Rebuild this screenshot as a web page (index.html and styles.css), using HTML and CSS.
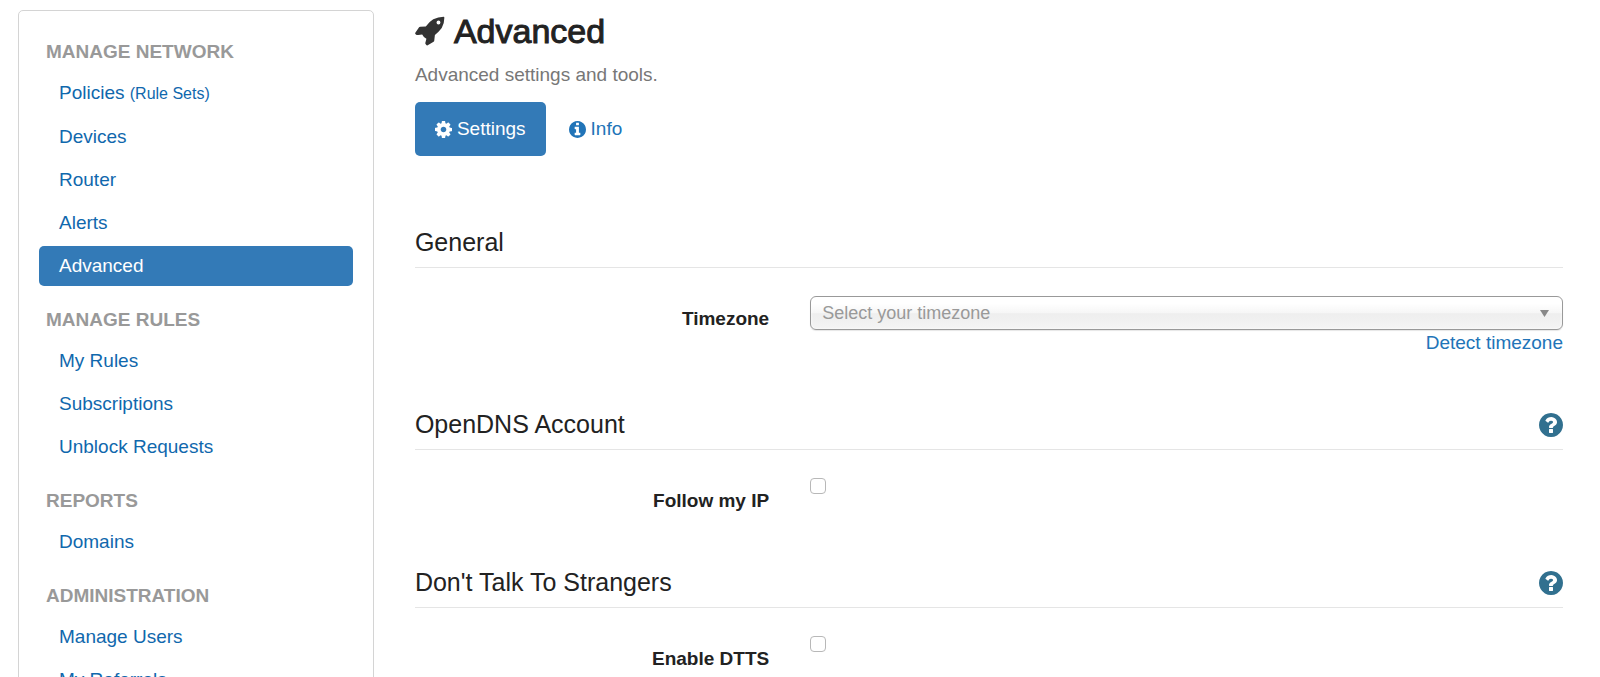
FILE: index.html
```html
<!DOCTYPE html>
<html lang="en">
<head>
<meta charset="utf-8">
<title>Advanced</title>
<link rel="stylesheet" href="styles.css">
</head>
<body>
<svg class="sprite" aria-hidden="true">
  <symbol id="question" viewBox="128 128 1536 1536"><path d="M1024 1376v-192q0-14-9-23t-23-9h-192q-14 0-23 9t-9 23v192q0 14 9 23t23 9h192q14 0 23-9t9-23zm256-672q0-88-55.500-163t-138.500-116-170-41q-243 0-371 213-15 24 8 42l132 100q7 6 19 6 16 0 25-12 53-68 86-92 34-24 86-24 48 0 85.500 26t37.500 59q0 38-20 61t-68 45q-63 28-115.500 86.500t-52.500 125.500v36q0 14 9 23t23 9h192q14 0 23-9t9-23q0-19 21.500-49.500t54.500-49.500q32-18 49-28.500t46-35 44.500-48 28-60.500 12.500-81zm384 192q0 209-103 385.500t-279.500 279.500-385.500 103-385.500-103-279.500-279.500-103-385.500 103-385.500 279.500-279.500 385.500-103 385.500 103 279.500 279.500 103 385.500z"/></symbol>
</svg>
<div class="page">
  <nav class="sidebar" aria-label="Main">
    <h4 class="nav-header">MANAGE NETWORK</h4>
    <ul class="nav-list">
      <li><a class="nav-link" href="#">Policies <small class="nav-note">(Rule Sets)</small></a></li>
      <li><a class="nav-link" href="#">Devices</a></li>
      <li><a class="nav-link" href="#">Router</a></li>
      <li><a class="nav-link" href="#">Alerts</a></li>
      <li><a class="nav-link nav-link-active" href="#">Advanced</a></li>
    </ul>
    <h4 class="nav-header">MANAGE RULES</h4>
    <ul class="nav-list">
      <li><a class="nav-link" href="#">My Rules</a></li>
      <li><a class="nav-link" href="#">Subscriptions</a></li>
      <li><a class="nav-link" href="#">Unblock Requests</a></li>
    </ul>
    <h4 class="nav-header">REPORTS</h4>
    <ul class="nav-list">
      <li><a class="nav-link" href="#">Domains</a></li>
    </ul>
    <h4 class="nav-header">ADMINISTRATION</h4>
    <ul class="nav-list">
      <li><a class="nav-link" href="#">Manage Users</a></li>
      <li><a class="nav-link" href="#">My Referrals</a></li>
    </ul>
  </nav>

  <main class="content">
    <h1 class="title">
      <svg class="title-icon" viewBox="44 47 92 92" aria-hidden="true"><path fill-rule="evenodd" d="M132 49Q134 49 134 52Q134 70 126 84Q118 95 105 105L103 123Q103 125 101 126L83 137Q80 138 78 135L76 132Q75 130 76 128L79 117Q71 114 66 104L54 105Q51 106 49 105L45 102Q44 100 45 98L56 82Q57 80 60 80L77 79Q87 65 100 57Q115 49 132 49ZM116 61A6 6 0 1 0 116 73A6 6 0 1 0 116 61Z"/></svg>
      Advanced
    </h1>
    <p class="lead">Advanced settings and tools.</p>
    <div class="tabs">
      <a class="tab tab-active" href="#"><svg class="tab-icon" viewBox="128 128 1536 1536" aria-hidden="true"><path d="M1152 896q0-106-75-181t-181-75-181 75-75 181 75 181 181 75 181-75 75-181zm512-109v222q0 12-8 23t-20 13l-185 28q-19 54-39 91 35 50 107 138 10 12 10 25t-9 23q-27 37-99 108t-94 71q-12 0-26-9l-138-108q-44 23-91 38-16 136-29 186-7 28-36 28h-222q-14 0-24.500-8.500t-11.500-21.500l-28-184q-49-16-90-37l-141 107q-10 9-25 9-14 0-25-11-126-114-165-168-7-10-7-23 0-12 8-23 15-21 51-66.500t54-70.500q-27-50-41-99l-183-27q-13-2-21-12.500t-8-23.500v-222q0-12 8-23t19-13l186-28q14-46 39-92-40-57-107-138-10-12-10-24 0-10 9-23 26-36 98.500-107.500t94.500-71.500q13 0 26 10l138 107q44-23 91-38 16-136 29-186 7-28 36-28h222q14 0 24.500 8.500t11.500 21.500l28 184q49 16 90 37l142-107q9-9 24-9 13 0 25 10 129 119 165 170 7 8 7 22 0 12-8 23-15 21-51 66.500t-54 70.500q26 50 41 98l183 28q13 2 21 12.500t8 23.500z"/></svg>Settings</a>
      <a class="tab" href="#"><svg class="tab-icon" viewBox="128 128 1536 1536" aria-hidden="true"><path d="M1152 1376v-160q0-14-9-23t-23-9h-96v-512q0-14-9-23t-23-9h-320q-14 0-23 9t-9 23v160q0 14 9 23t23 9h96v320h-96q-14 0-23 9t-9 23v160q0 14 9 23t23 9h448q14 0 23-9t9-23zm-128-896v-160q0-14-9-23t-23-9h-192q-14 0-23 9t-9 23v160q0 14 9 23t23 9h192q14 0 23-9t9-23zm640 416q0 209-103 385.500t-279.500 279.500-385.500 103-385.500-103-279.500-279.500-103-385.500 103-385.500 279.500-279.500 385.500-103 385.500 103 279.500 279.500 103 385.500z"/></svg>Info</a>
    </div>

    <section class="section">
      <div class="section-head"><h2 class="section-title">General</h2></div>
      <div class="field">
        <label class="field-label" for="timezone">Timezone</label>
        <div class="field-control">
          <div class="select-wrap">
            <select class="select" id="timezone"><option>Select your timezone</option></select>
            <svg class="select-arrow" viewBox="0 0 9 7" aria-hidden="true"><path d="M0 0h9L4.500 7z"/></svg>
          </div>
          <a class="detect" href="#">Detect timezone</a>
        </div>
      </div>
    </section>

    <section class="section">
      <div class="section-head">
        <h2 class="section-title">OpenDNS Account</h2>
        <a class="help" href="#" aria-label="Help"><svg class="help-icon" aria-hidden="true"><use href="#question"/></svg></a>
      </div>
      <div class="field">
        <label class="field-label" for="follow-ip">Follow my IP</label>
        <div class="field-control"><input class="checkbox" type="checkbox" id="follow-ip"></div>
      </div>
    </section>

    <section class="section">
      <div class="section-head">
        <h2 class="section-title">Don't Talk To Strangers</h2>
        <a class="help" href="#" aria-label="Help"><svg class="help-icon" aria-hidden="true"><use href="#question"/></svg></a>
      </div>
      <div class="field">
        <label class="field-label" for="dtts">Enable DTTS</label>
        <div class="field-control"><input class="checkbox" type="checkbox" id="dtts"></div>
      </div>
    </section>
  </main>
</div>
</body>
</html>
```
FILE: styles.css
```css
* {
  box-sizing: border-box;
}

body {
  margin: 0;
  background: #fff;
  color: #222;
  font-family: "Liberation Sans", Arial, sans-serif;
  font-size: 19px;
  line-height: 24px;
}

a {
  color: #2174b8;
  text-decoration: none;
}

svg {
  display: block;
  flex: none;
  fill: currentColor;
}

.sprite {
  position: absolute;
  width: 0;
  height: 0;
}

.page {
  display: grid;
  grid-template-columns: minmax(0, 31fr) minmax(0, 100fr);
  gap: 41px;
  align-items: start;
  padding: 10px 37px 10px 18px;
}

/* Sidebar */

.sidebar {
  padding: 7px 20px 20px;
  border: 1px solid #d4d4d4;
  border-radius: 5px;
}

.nav-header {
  margin: 0;
  padding: 22px 7px 9px;
  color: #999;
  font-size: 19px;
  font-weight: bold;
}

.nav-list {
  display: flex;
  flex-direction: column;
  gap: 3px;
  margin: 0;
  padding: 0;
  list-style: none;
}

.nav-link {
  display: block;
  padding: 8px 20px;
  border-radius: 5px;
  color: #1068ad;
}

.nav-link-active {
  background: #337ab7;
  color: #fff;
}

.nav-note {
  font-size: 16px;
}

/* Page heading and tabs */

.title {
  display: flex;
  align-items: center;
  gap: 9px;
  margin: 0;
  font-size: 34px;
  font-weight: 500;
  line-height: 42px;
  -webkit-text-stroke: 1px currentColor;
}

.title-icon {
  width: 30px;
  height: 30px;
  color: #333;
}

.lead {
  margin: 11px 0 15px;
  color: #777;
}

.tabs {
  display: flex;
  gap: 3px;
  margin-bottom: 71px;
}

.tab {
  display: flex;
  align-items: center;
  gap: 5px;
  padding: 15px 20px;
  border-radius: 5px;
}

.tab-active {
  background: #337ab7;
  color: #fff;
}

.tab-icon {
  width: 17px;
  height: 17px;
}

/* Settings sections */

.section {
  margin-bottom: 54px;
}

.section-head {
  display: flex;
  align-items: flex-end;
  justify-content: space-between;
  padding-bottom: 10px;
  border-bottom: 1px solid #e5e5e5;
}

.section-title {
  margin: 0;
  font-size: 25px;
  font-weight: 500;
  line-height: 30px;
}

.help {
  padding-bottom: 2px;
  color: #31708f;
}

.help-icon {
  width: 24px;
  height: 24px;
}

.field {
  display: grid;
  grid-template-columns: minmax(0, 8fr) minmax(0, 17fr);
  gap: 41px;
  padding-top: 28px;
}

.field-label {
  padding-top: 11px;
  font-weight: bold;
  text-align: right;
}

.field-control {
  display: flex;
  flex-direction: column;
  align-items: flex-start;
  gap: 1px;
}

.select-wrap {
  position: relative;
  width: 100%;
}

.select {
  display: block;
  width: 100%;
  height: 34px;
  margin: 0;
  padding: 0 32px 0 11px;
  appearance: none;
  border: 1px solid #999;
  border-radius: 6px;
  background: linear-gradient(#fff 20%, #f6f6f6 50%, #eee 52%, #f4f4f4 100%);
  box-shadow: inset 0 0 3px #fff, 0 1px 1px rgba(0, 0, 0, 0.1);
  color: #999;
  font-family: inherit;
  font-size: 18px;
}

.select-arrow {
  position: absolute;
  top: 14px;
  right: 14px;
  width: 9px;
  height: 7px;
  color: #888;
  pointer-events: none;
}

.detect {
  align-self: flex-end;
}

.checkbox {
  width: 16px;
  height: 16px;
  margin: 0;
  appearance: none;
  border: 1px solid #b8b8b8;
  border-radius: 4px;
  background: #fff;
}

.checkbox:checked {
  background: #337ab7;
}
```
